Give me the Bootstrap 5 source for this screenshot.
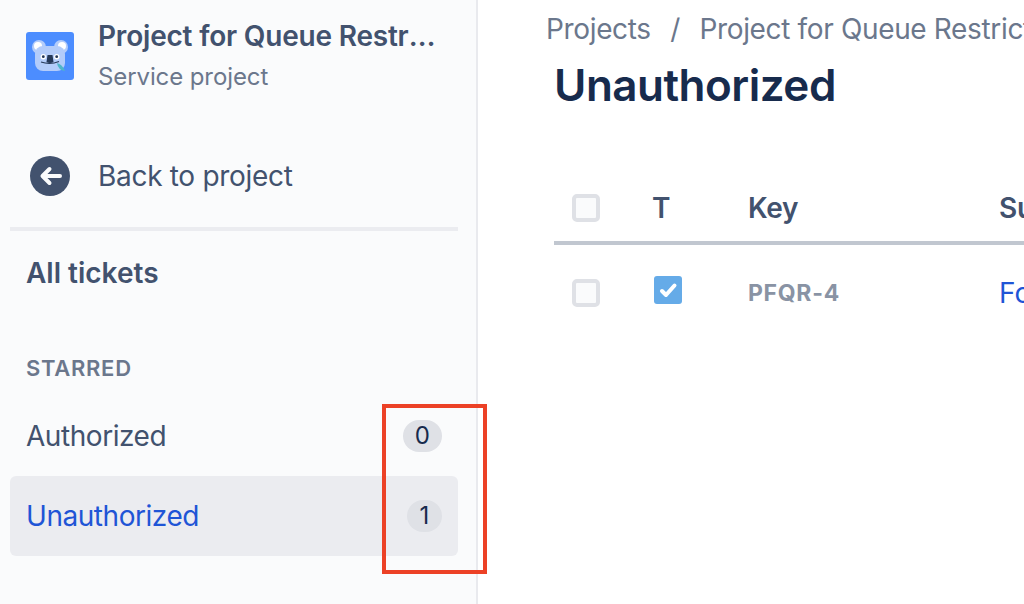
<!DOCTYPE html>
<html lang="en">
<head>
    <meta charset="UTF-8">
    <meta name="viewport" content="width=device-width, initial-scale=1, shrink-to-fit=no">
    <link rel="stylesheet" href="https://cdn.jsdelivr.net/npm/bootstrap@5.3.0/dist/css/bootstrap.min.css">
    <title>Unauthorized</title>
    <style>
        html, body {
            height: 604px;
            overflow: hidden;
        }

        body {
            font-family: Inter, "Noto Sans", sans-serif;
            background: #fff;
            color: #42526e;
            position: relative;
        }

        .page-wrap {
            height: 604px;
            width: 1024px;
        }

        /* sidebar */
        .side-nav {
            width: 478px;
            flex: none;
            height: 604px;
            background: #fafbfc;
            border-right: 2px solid #e9eaee;
            padding: 0 18px 0 10px;
        }

        .proj-head {
            height: 136px;
            padding: 16px 0 0 16px;
        }

        .proj-logo {
            width: 48px;
            height: 48px;
            flex: none;
            margin: 16px 24px 0 0;
        }

        .proj-name {
            font-size: 28px;
            line-height: 40px;
            font-weight: 600;
            letter-spacing: -.2px;
            white-space: nowrap;
            overflow: hidden;
            text-overflow: ellipsis;
            width: 342px;
        }

        .proj-type {
            font-size: 24px;
            line-height: 42px;
            letter-spacing: -.1px;
            color: #6b778c;
        }

        .back-row {
            height: 95px;
            padding: 0 0 12px 20px;
            border-bottom: 4px solid #ebecf0;
            font-size: 28px;
            letter-spacing: -.3px;
        }

        .back-icon {
            width: 40px;
            height: 40px;
            margin-right: 28px;
        }

        .all-tickets {
            font-size: 28px;
            font-weight: 600;
            line-height: 40px;
            padding: 22px 0 0 16px;
        }

        .group-title {
            font-size: 22px;
            font-weight: 600;
            letter-spacing: .7px;
            line-height: 32px;
            color: #6b778c;
            padding: 59px 0 0 16px;
            margin-bottom: 12px;
        }

        .queue-row {
            height: 80px;
            padding: 0 16px;
            border-radius: 6px;
            font-size: 28px;
            letter-spacing: -.45px;
        }

        .queue-row.on {
            background: #ebecf0;
            color: #1f55d6;
        }

        .count-pill {
            background: #dfe1e6;
            color: #172b4d;
            font-size: 24px;
            line-height: 32px;
            letter-spacing: 0;
            min-width: 35px;
            padding: 0 12px;
            border-radius: 16px;
            text-align: center;
        }

        /* main */
        .main-area {
            padding-left: 76px;
            min-width: 0;
        }

        .crumbs {
            font-size: 28px;
            line-height: 40px;
            letter-spacing: -.35px;
            color: #6b778c;
            padding-top: 9px;
            margin-left: -8px;
            white-space: nowrap;
        }

        .crumbs i {
            font-style: normal;
            padding: 0 19.5px;
        }

        .page-title {
            font-size: 44px;
            line-height: 56px;
            font-weight: 600;
            letter-spacing: -.5px;
            color: #172b4d;
            margin: 8px 0 0;
        }

        .tk-head, .tk-row {
            white-space: nowrap;
        }

        .tk-head {
            margin-top: 56px;
            height: 76px;
            padding-top: 6px;
            border-bottom: 4px solid #c1c7d0;
            font-size: 28px;
            font-weight: 600;
            letter-spacing: -.3px;
            width: 600px;
        }

        .tk-row {
            height: 96px;
            font-size: 28px;
            width: 600px;
        }

        .cell-check {
            width: 98px;
            flex: none;
            padding-left: 18px;
        }

        .cell-type {
            width: 96px;
            flex: none;
        }

        .cell-key {
            width: 251px;
            flex: none;
        }

        .tick-box {
            width: 28px;
            height: 28px;
            background: #fafbfc;
            border: 4px solid #dfe1e6;
            border-radius: 5px;
        }

        .type-icon {
            width: 28px;
            height: 28px;
            display: block;
            margin: 0 0 6px 2px;
        }

        .key-text {
            font-size: 23px;
            font-weight: 700;
            letter-spacing: .7px;
            color: #8993a4;
        }

        .link-text {
            color: #1f55d6;
        }

        /* red annotation box */
        .mark-box {
            position: absolute;
            left: 382px;
            top: 404px;
            width: 105px;
            height: 170px;
            border: 4px solid #ec4126;
        }
    </style>
</head>
<body>

<div class="page-wrap d-flex">
    <!-- sidebar -->
    <div class="side-nav">
        <div class="proj-head d-flex">
            <svg class="proj-logo" viewBox="0 0 48 48">
                <rect width="48" height="48" rx="3" fill="#4c8dff"/>
                <circle cx="13" cy="15" r="7" fill="#b3ccfa"/>
                <circle cx="35" cy="15" r="7" fill="#b3ccfa"/>
                <circle cx="12" cy="14" r="4" fill="#fff"/>
                <circle cx="36" cy="14" r="4" fill="#fff"/>
                <rect x="9" y="14" width="30" height="25" rx="8" fill="#b3ccfa"/>
                <circle cx="17.300" cy="24.700" r="2.700" fill="#fff"/>
                <circle cx="30.700" cy="24.700" r="2.700" fill="#fff"/>
                <circle cx="17.300" cy="24.700" r="1.400" fill="#253858"/>
                <circle cx="30.700" cy="24.700" r="1.400" fill="#253858"/>
                <path d="M15 30 Q24 33 33 29.500" stroke="#253858" stroke-width="1.200" fill="none"/>
                <path d="M21.500 23 h5 l1 7 q-3.500 2 -7 0z" fill="#253858"/>
                <path d="M31 31 q5 1 8 8 q-7 -1 -8 -8z" fill="#4fb6c9"/>
            </svg>
            <div>
                <div class="proj-name">Project for Queue Restrictions</div>
                <div class="proj-type">Service project</div>
            </div>
        </div>
        <div class="back-row d-flex align-items-center">
            <svg class="back-icon" viewBox="0 0 40 40">
                <circle cx="20" cy="20" r="20" fill="#42526e"/>
                <path d="M30 20H13M19.500 13l-7 7 7 7" stroke="#fafbfc" stroke-width="4" fill="none" stroke-linecap="round" stroke-linejoin="round"/>
            </svg>
            <span>Back to project</span>
        </div>
        <div class="all-tickets">All tickets</div>
        <div class="group-title">STARRED</div>
        <div class="queue-row d-flex align-items-center justify-content-between">
            <span>Authorized</span>
            <span class="count-pill">0</span>
        </div>
        <div class="queue-row on d-flex align-items-center justify-content-between">
            <span>Unauthorized</span>
            <span class="count-pill">1</span>
        </div>
    </div>

    <!-- main -->
    <div class="main-area flex-grow-1 overflow-hidden">
        <div class="crumbs">Projects<i>/</i>Project for Queue Restrictions</div>
        <h1 class="page-title">Unauthorized</h1>

        <div class="tk-head d-flex align-items-center">
            <div class="cell-check"><div class="tick-box"></div></div>
            <div class="cell-type">T</div>
            <div class="cell-key">Key</div>
            <div>Summary</div>
        </div>
        <div class="tk-row d-flex align-items-center">
            <div class="cell-check"><div class="tick-box"></div></div>
            <div class="cell-type">
                <svg class="type-icon" viewBox="0 0 28 28">
                    <rect width="28" height="28" rx="3" fill="#65abe8"/>
                    <path d="M8 15l4 4 8.500-9.500" stroke="#fff" stroke-width="4" fill="none" stroke-linecap="round" stroke-linejoin="round"/>
                </svg>
            </div>
            <div class="cell-key key-text">PFQR-4</div>
            <div class="link-text">Forbidden ticket</div>
        </div>
    </div>
</div>

<div class="mark-box"></div>

<script src="https://cdn.jsdelivr.net/npm/bootstrap@5.3.0/dist/js/bootstrap.bundle.min.js"></script>
</body>
</html>
